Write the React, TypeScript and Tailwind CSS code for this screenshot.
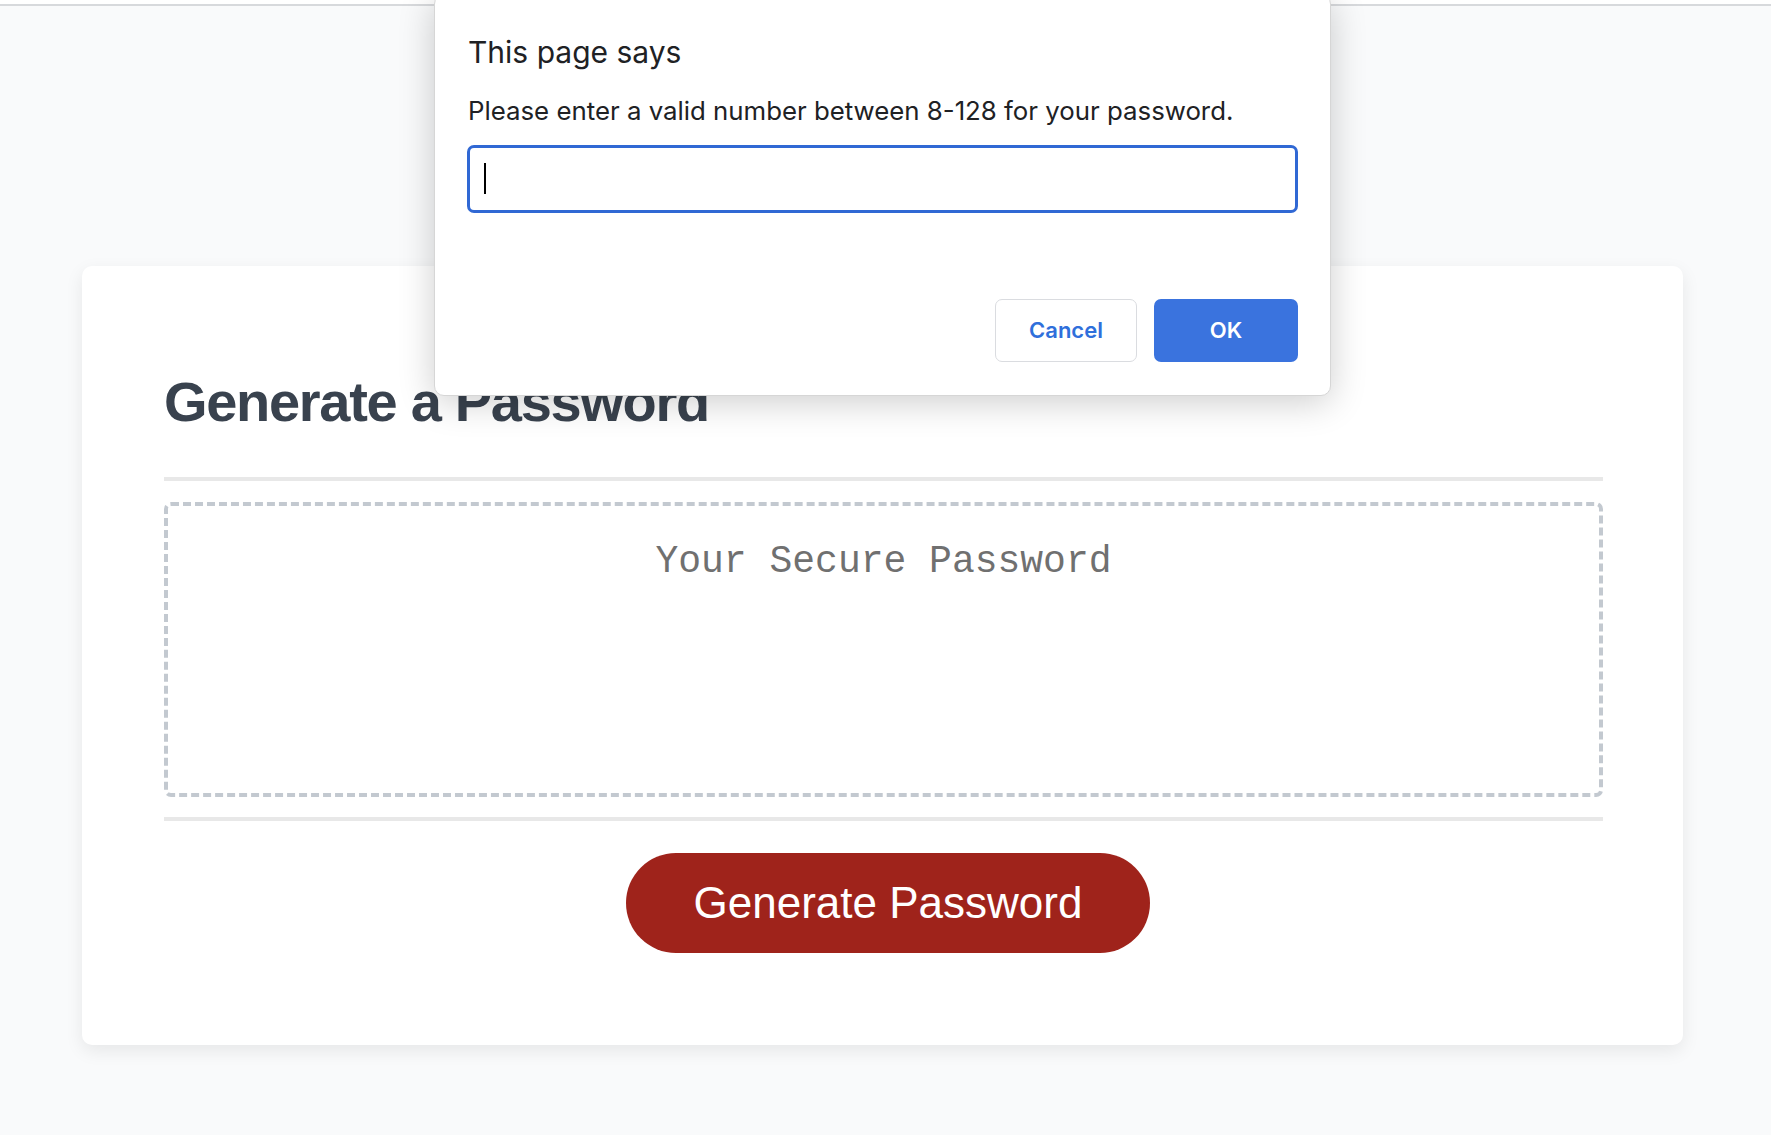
export default function App() {
  return (
    <div className="relative min-h-screen overflow-hidden bg-[#f9fafb]" style={{ fontFamily: '"Liberation Sans", Arial, sans-serif' }}>
      <div className="h-[4px] bg-white" />
      <div className="h-[2px] bg-[#d7d9dc]" />

      <main className="ml-[82px] mt-[260px] w-[1601px] rounded-[10px] bg-white pb-[92px] pl-[82px] pr-[80px] pt-[108px] shadow-[0_6px_18px_rgba(0,0,0,0.08)]">
        <h1 className="text-[56px] font-bold leading-none tracking-[-1.3px] text-[#39424e]">Generate a Password</h1>
        <div className="mt-[47px] h-[4px] bg-[#e8e8e8]" />
        <div className="mt-[21px] h-[295px] rounded-[7px] border-[4px] border-dashed border-[#c3c9d0] pt-[37px] text-center">
          <span className="text-[38px] leading-none text-[#707070]" style={{ fontFamily: '"Liberation Mono", "Courier New", monospace' }}>
            Your Secure Password
          </span>
        </div>
        <div className="mt-[20px] h-[4px] bg-[#e8e8e8]" />
        <div className="mt-[32px] flex justify-center pl-[9px]">
          <button type="button" className="h-[100px] w-[524px] rounded-full bg-[#9f231b] text-[44px] leading-none text-white">
            Generate Password
          </button>
        </div>
      </main>

      <div
        className="absolute left-[434px] top-[-6px] w-[897px] rounded-[10px] border border-[#d6d6d6] bg-white px-[32px] pb-[33px] pt-[42px] shadow-[0_6px_36px_rgba(0,0,0,0.2)]"
        style={{ fontFamily: 'Inter, "Noto Sans", sans-serif' }}
      >
        <div className="pl-[1px] text-[30px] leading-none text-[#202124]">This page says</div>
        <div className="mt-[31px] pl-[1px] text-[25.8px] leading-none text-[#202124]">Please enter a valid number between 8-128 for your password.</div>
        <div className="relative mt-[21px] h-[68px] rounded-[7px] border-[3px] border-[#3068d4]">
          <span className="absolute left-[14px] top-[15px] h-[31px] w-[2px] bg-black" />
        </div>
        <div className="mt-[86px] flex justify-end gap-[17px]">
          <button type="button" className="h-[63px] w-[142px] rounded-[7px] border border-[#dadce0] bg-white text-[22px] font-semibold text-[#2f6fdb]">
            Cancel
          </button>
          <button type="button" className="h-[63px] w-[144px] rounded-[7px] bg-[#3a73de] text-[22px] font-semibold text-white">
            OK
          </button>
        </div>
      </div>
    </div>
  );
}
